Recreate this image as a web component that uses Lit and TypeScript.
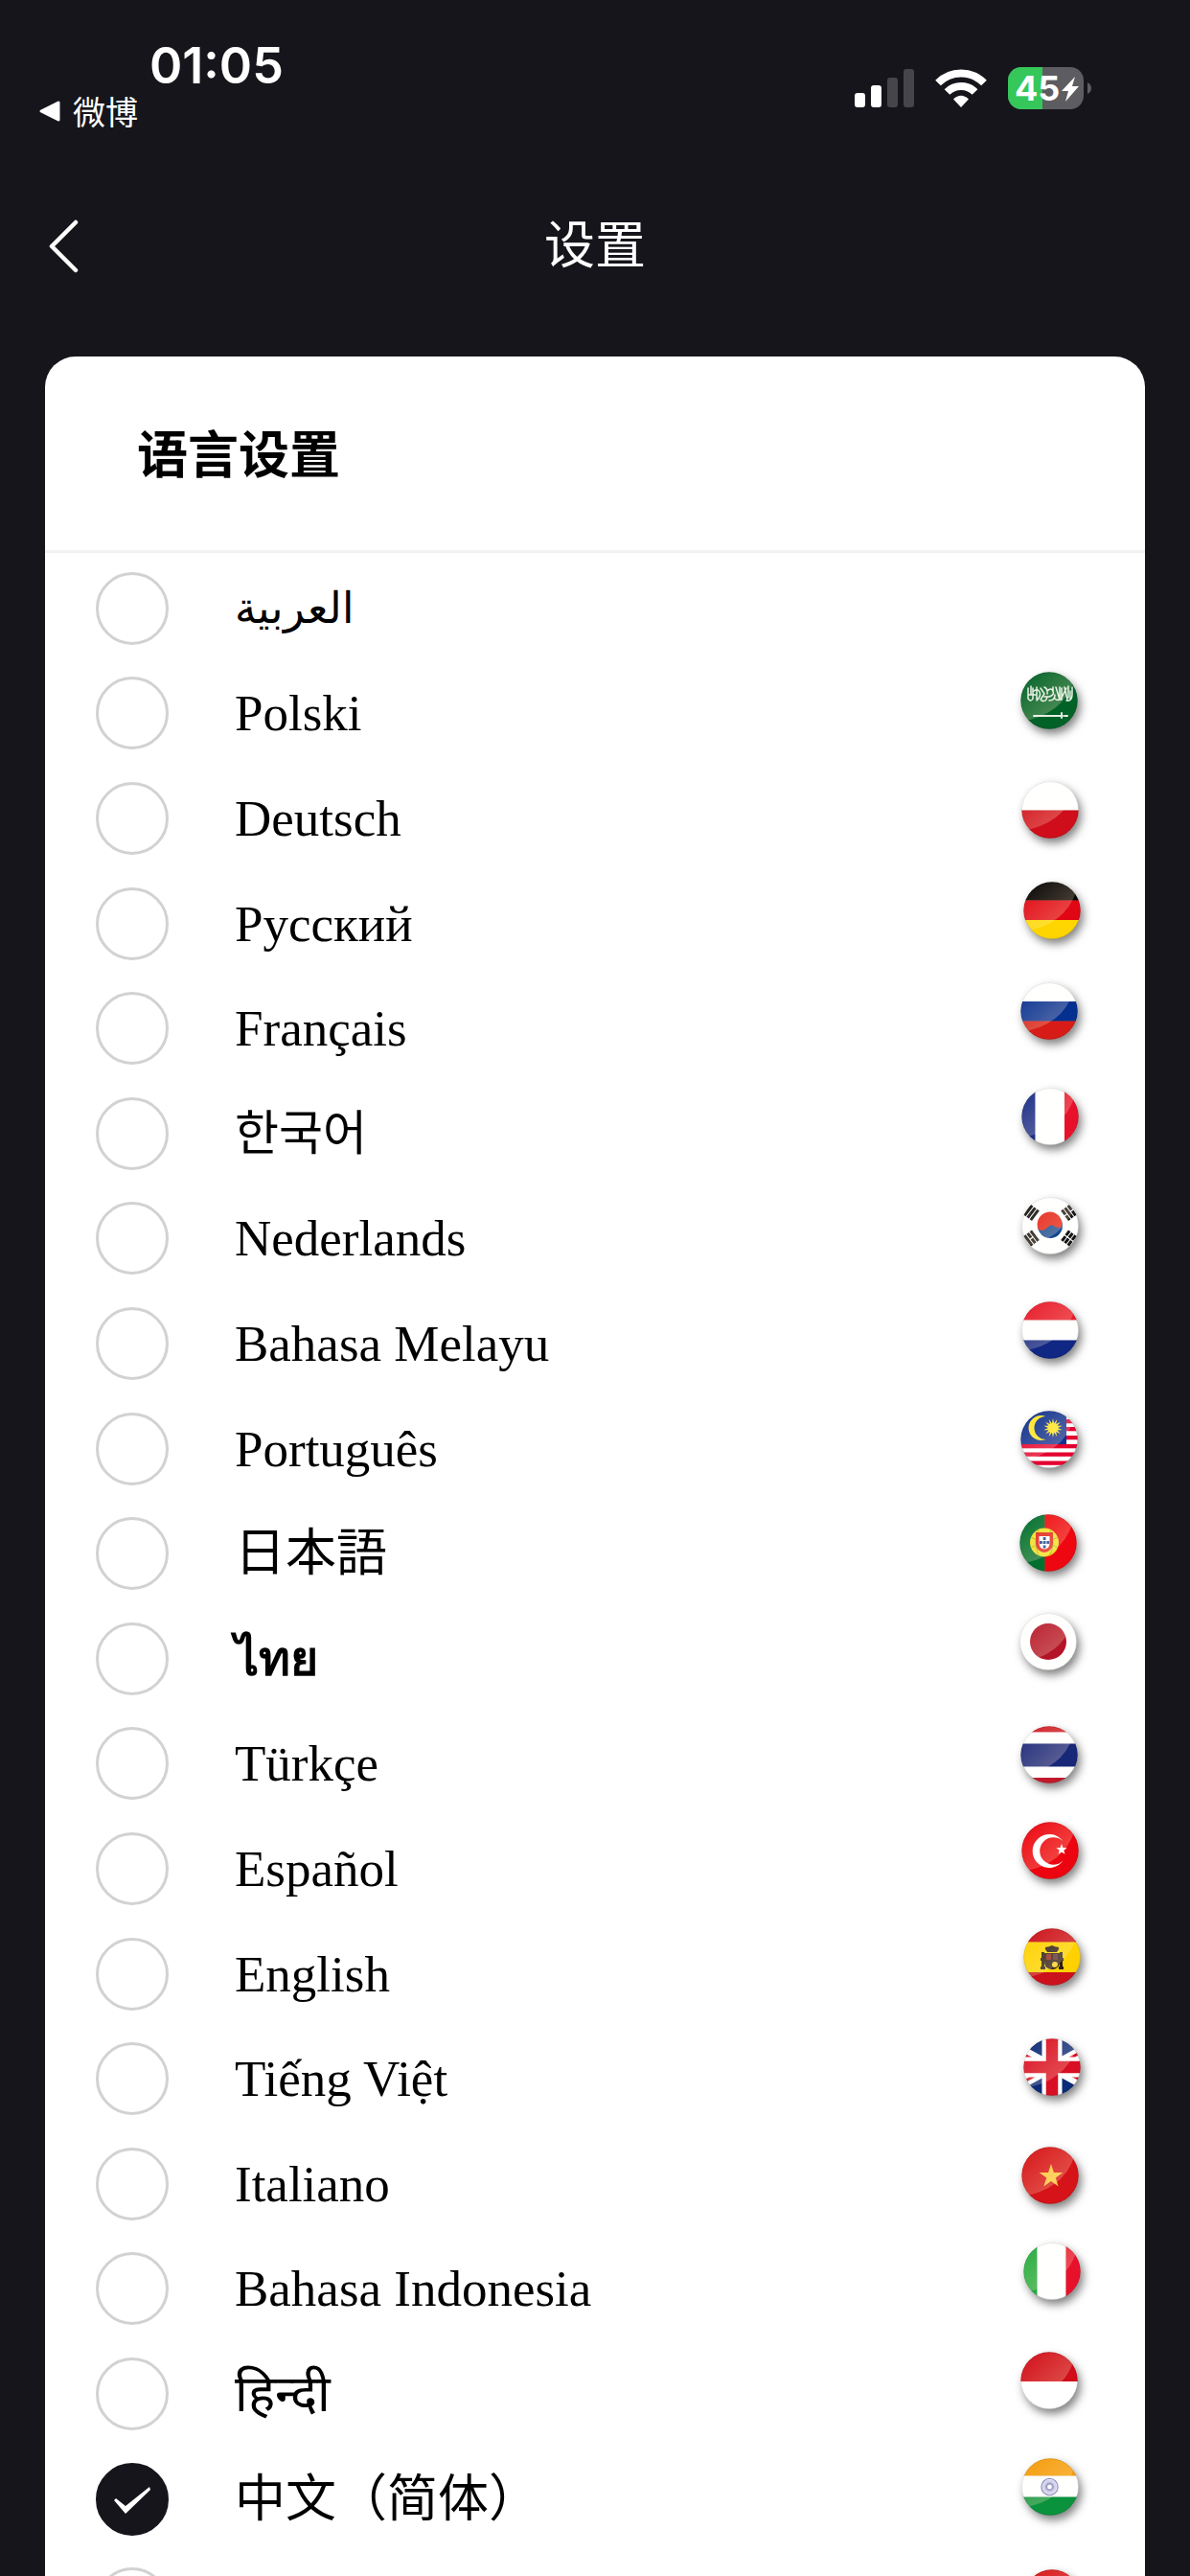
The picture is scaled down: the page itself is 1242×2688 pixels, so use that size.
import { LitElement, html, svg, css, nothing } from "lit";
import { customElement, property, state } from "lit/decorators.js";

type Flag = { art: unknown; cx: number; cy: number };
type Language = { code: string; name?: string; label?: string; flag?: Flag };

/* Every flag is drawn in a 60 x 60 box and clipped to a disc. */
const bands = (...parts: [string, number][]) => {
  let y = 0;
  return parts.map(([fill, h]) => {
    const band = svg`<rect x="0" y=${y} width="60" height=${h + 0.3} fill=${fill}></rect>`;
    y += h;
    return band;
  });
};
const columns = (...parts: [string, number][]) => {
  let x = 0;
  return parts.map(([fill, w]) => {
    const column = svg`<rect x=${x} y="0" width=${w + 0.3} height="60" fill=${fill}></rect>`;
    x += w;
    return column;
  });
};
const star = (cx: number, cy: number, outer: number, inner: number, tips: number, fill: string, turn = 0) => {
  const points = Array.from({ length: tips * 2 }, (_, i) => {
    const r = i % 2 ? inner : outer;
    const a = (Math.PI * i) / tips - Math.PI / 2 + turn;
    return `${(cx + r * Math.cos(a)).toFixed(2)},${(cy + r * Math.sin(a)).toFixed(2)}`;
  }).join(" ");
  return svg`<polygon points=${points} fill=${fill}></polygon>`;
};

const saudi = svg`
  <rect width="60" height="60" fill="#006227"></rect>
  <g fill="none" stroke="#e6efe4" stroke-width="1.5" stroke-linecap="round" stroke-linejoin="round">
    <path d="M8 17v11q3 4 5 0V17M11 15v8M9 24h7M17 16v13M14 20q4-3 6 1t-3 9M21 17l4 6-4 6M22 30q5 2 6-4M25 16q4 2 3 7M28 20q4-4 6 0t-4 6h-5M30 30q6 0 6-6M34 16v5M37 16l4 13M36 28q3 3 5 0V16M43 17v12M42 29l6-12M46 16l3 13M50 15v12M48 30q6 1 6-6V16M52 20v9"></path>
    <path d="M14 46h30" stroke-width="2"></path><path d="M43 43v5M46 46h3" stroke-width="2"></path>
  </g>`;

const trigram = (x: number, y: number, angle: number, broken: number[]) => svg`
  <g transform=${`translate(${x} ${y}) rotate(${angle})`} stroke="#151515" stroke-width="3">
    ${[-4, 0, 4].map((d, i) =>
      broken.includes(i)
        ? svg`<path d=${`M-6.500 ${d}H-0.600M0.600 ${d}H6.500`}></path>`
        : svg`<path d=${`M-6.500 ${d}H6.500`}></path>`)}
  </g>`;
const korea = svg`
  <rect width="60" height="60" fill="#fffffe"></rect>
  <circle cx="30" cy="30" r="13" fill="#0f478d"></circle>
  <path d="M17.500 33.500A13 13 0 1 1 42.500 27.500Q42 34 36 31.500C31 28.500 30 29 27 32C23 36 19.500 35 17.500 33.500Z" fill="#e32219"></path>
  ${trigram(10.5, 16.5, -53, [])}${trigram(49.5, 16.5, 53, [0, 2])}
  ${trigram(10.5, 43, 53, [1])}${trigram(49.5, 43, -53, [0, 1, 2])}`;

const malaysia = svg`
  <rect width="60" height="60" fill="#fff"></rect>
  ${[9, 17, 26, 35, 43.5, 52.5].map((y) => svg`<rect y=${y} width="60" height="4.3" fill="#e4002f"></rect>`)}
  <rect width="48" height="35" fill="#0f3290"></rect>
  <path d="M26.500 6A13 13 0 1 0 26.500 30A11.800 11.800 0 1 1 26.500 6Z" fill="#ffe52c"></path>
  ${star(34, 18, 10, 5, 14, "#ffe52c")}`;

const portugal = svg`
  ${columns(["#00702f", 26.5], ["#ee0710", 34])}
  <circle cx="26" cy="29.500" r="15" fill="#eedf27"></circle>
  <path d="M12 24q14 8 28 0M12 35q14-8 28 0M20 16q-6 13 0 27M32 16q6 13 0 27" fill="none" stroke="#c4b51c" stroke-width="1.200"></path>
  <path d="M17 19H35V31Q34 39 26 40Q18 39 17 31Z" fill="#e3251c"></path>
  <path d="M20.500 23H31.500V31Q31 36 26 36.500Q21 36 20.500 31Z" fill="#fff"></path>
  <g fill="#17418d"><rect x="24.700" y="24" width="2.800" height="3"></rect><rect x="21" y="28" width="2.800" height="3"></rect><rect x="24.700" y="28" width="2.800" height="3"></rect><rect x="28.400" y="28" width="2.800" height="3"></rect><rect x="24.700" y="32.500" width="2.800" height="3"></rect></g>`;

const turkey = svg`
  <rect width="60" height="60" fill="#ec0510"></rect>
  <path d="M43.500 20.500A17.500 17.500 0 1 0 43.500 40.500A14.200 14.200 0 1 1 43.500 20.500Z" fill="#fff"></path>
  ${star(42, 29, 6, 2.4, 5, "#fff")}`;

const spain = svg`
  ${bands(["#cb111b", 14.5], ["#ffd100", 31.5], ["#cb111b", 15])}
  <g fill="#2b1d18">
    <path d="M23 22Q22 19 26 19.500L30 18L34 19.500Q38 19 37 22L35 25H25Z"></path>
    <path d="M22 26H38V36Q37 43 30 43Q23 43 22 36Z"></path>
    <path d="M19 25h3v15h1v3h-5v-3h1zM38 25h3v15h1v3h-5v-3h1zM18 31h5v3h-5zM37 31h5v3h-5z"></path>
  </g>
  <path d="M24 27h5v6h-5z" fill="#8d2921"></path><path d="M31 27h5v6h-5z" fill="#59303a"></path>
  <circle cx="33" cy="38" r="3" fill="#f5cf2c"></circle>`;

const britain = svg`
  <rect width="60" height="60" fill="#0b2b78"></rect>
  <path d="M-30 -3L90 63M90 -3L-30 63" stroke="#fff" stroke-width="10"></path>
  <path d="M-30 0L30 33M90 -2L30 31M-30 62L30 29M90 60L30 27" stroke="#d80e24" stroke-width="3"></path>
  <path d="M30 0V60M0 30H60" stroke="#fff" stroke-width="21"></path>
  <path d="M30 0V60M0 30H60" stroke="#d80e24" stroke-width="12.500"></path>`;

const india = svg`
  ${bands(["#f59b0c", 18.5], ["#fffffe", 22], ["#0a923c", 20])}
  <g fill="none" stroke="#7779b8">
    <circle cx="29.500" cy="30" r="8.600" stroke-width="1.300"></circle>
    <circle cx="29.500" cy="30" r="6" stroke-width="3" stroke="#c9c9e6"></circle>
    <circle cx="29.500" cy="30" r="3.500" stroke-width="2.400" stroke="#8d8fc6"></circle>
  </g>`;

const LANGUAGES: Language[] = [
  { code: "ar", name: "العربية" },
  { code: "pl", name: "Polski", flag: { art: saudi, cx: 54, cy: 42 } },
  { code: "de", name: "Deutsch", flag: { art: bands(["#fffffe", 30.5], ["#d00d1a", 30]), cx: 55, cy: 46 } },
  { code: "ru", name: "Русский", flag: { art: bands(["#050404", 19.5], ["#e00613", 20.5], ["#ffd500", 21]), cx: 57, cy: 41 } },
  { code: "fr", name: "Français", flag: { art: bands(["#fffffe", 20], ["#04308f", 20.5], ["#d71c17", 20]), cx: 54, cy: 37 } },
  { code: "ko", name: "한국어", flag: { art: columns(["#1b2f87", 14.5], ["#fffffe", 30.5], ["#e8112b", 16]), cx: 55, cy: 37 } },
  { code: "nl", name: "Nederlands", flag: { art: korea, cx: 55, cy: 42 } },
  { code: "ms", name: "Bahasa Melayu", flag: { art: bands(["#e81a2b", 19.5], ["#fffffe", 21], ["#102783", 20]), cx: 55, cy: 41 } },
  { code: "pt", name: "Português", flag: { art: malaysia, cx: 54, cy: 45 } },
  { code: "ja", name: "日本語", flag: { art: portugal, cx: 53, cy: 44 } },
  { code: "th", name: "ไทย", flag: { art: svg`<rect width="60" height="60" fill="#fffffe"></rect><circle cx="30" cy="30" r="19" fill="#b31428"></circle>`, cx: 53, cy: 37 } },
  { code: "tr", name: "Türkçe", flag: { art: bands(["#cf2029", 6.5], ["#fffffe", 12], ["#182878", 24], ["#fffffe", 11.5], ["#c01a2a", 7]), cx: 54, cy: 46 } },
  { code: "es", name: "Español", flag: { art: turkey, cx: 55, cy: 36 } },
  { code: "en", name: "English", flag: { art: spain, cx: 57, cy: 37 } },
  { code: "vi", name: "Tiếng Việt", flag: { art: britain, cx: 57, cy: 43 } },
  { code: "it", name: "Italiano", flag: { art: svg`<rect width="60" height="60" fill="#d61318"></rect>${star(31, 31, 13, 5, 5, "#ffc63c")}`, cx: 55, cy: 46 } },
  { code: "id", name: "Bahasa Indonesia", flag: { art: columns(["#25ab40", 14.5], ["#fffffe", 30], ["#e8112b", 16]), cx: 57, cy: 37 } },
  { code: "hi", name: "हिन्दी", flag: { art: bands(["#d00d18", 31], ["#fff", 30]), cx: 54, cy: 41 } },
  { code: "zh-Hans", name: "中文（简体）", flag: { art: india, cx: 55, cy: 42 } },
  { code: "zh-Hant", label: "中文（繁體）", flag: { art: svg`<rect width="60" height="60" fill="#d61318"></rect>`, cx: 57, cy: 49 } },
];

@customElement("flag-badge")
export class FlagBadge extends LitElement {
  @property({ attribute: false }) flag!: Flag;

  static styles = css`
    :host { display: block; }
    .badge { display: block; width: 110px; height: 100px; overflow: visible; }
    .disc { filter: drop-shadow(3px 5px 5px rgba(0, 0, 0, 0.5)); }
    .gloss { mix-blend-mode: screen; }
  `;

  render() {
    const { art, cx, cy } = this.flag;
    return html`<svg class="badge" viewBox="0 5 110 100" aria-hidden="true">
      <defs>
        <clipPath id="round"><circle cx="30" cy="30" r="29.700"></circle></clipPath>
        <linearGradient id="gloss" x1="0" y1="0" x2="1" y2="1">
          <stop offset="0" stop-color="#ffe0b8" stop-opacity="0"></stop>
          <stop offset="1" stop-color="#ffe0b8" stop-opacity="0.4"></stop>
        </linearGradient>
      </defs>
      <g class="disc" transform=${`translate(${cx - 30} ${cy - 30})`}>
        <g clip-path="url(#round)">
          ${art}
          <path class="gloss" d="M0 0H58Q50 40 10 50L0 52Z" fill="url(#gloss)"></path>
          <circle cx="30" cy="30" r="29.500" fill="none" stroke="#000" stroke-opacity="0.12"></circle>
        </g>
      </g>
    </svg>`;
  }
}

@customElement("status-bar")
export class StatusBar extends LitElement {
  static styles = css`
    :host { display: block; color: #fff; }
    .bar { display: flex; justify-content: space-between; padding: 36px 102px 0 40px; }
    .left { display: flex; flex-direction: column; }
    .time { padding-left: 116px; font: 600 52px/66px Inter, "Liberation Sans", sans-serif; }
    .back { display: flex; align-items: center; gap: 12px; color: inherit; text-decoration: none;
      font: 400 34px/28px "Noto Sans CJK SC", sans-serif; }
    .triangle { width: 24px; height: 24px; }
    .icons { display: flex; align-items: flex-start; gap: 22px; padding-top: 34px; }
    .signal { width: 62px; height: 44px; }
    .wifi { width: 54px; height: 44px; }
    .battery { width: 88px; height: 44px; }
    .level { font: 700 36px Inter, "Liberation Sans", sans-serif; }
  `;

  render() {
    return html`<div class="bar">
      <div class="left">
        <time class="time">01:05</time>
        <a class="back" href="#weibo">
          <svg class="triangle" viewBox="0 0 24 24" aria-hidden="true"><path d="M3 12L21 3V21Z" fill="#fff" stroke="#fff" stroke-width="3" stroke-linejoin="round"></path></svg>
          <span>微博</span>
        </a>
      </div>
      <div class="icons">
        <svg class="signal" viewBox="0 0 62 44" aria-hidden="true">
          <rect x="0" y="27" width="11" height="15" rx="3" fill="#fff"></rect>
          <rect x="17" y="19" width="11" height="23" rx="3" fill="#fff"></rect>
          <rect x="34" y="11" width="11" height="31" rx="3" fill="#46454a"></rect>
          <rect x="51" y="2" width="11" height="40" rx="3" fill="#46454a"></rect>
        </svg>
        <svg class="wifi" viewBox="0 0 54 44" aria-hidden="true">
          <g fill="none" stroke="#fff" stroke-width="8">
            <path d="M3 16.500Q13 6.500 27 6.500T51 16.500"></path>
            <path d="M12.500 26Q18.500 20 27 20T41.500 26"></path>
          </g>
          <path d="M19 33.500Q27 26 35 33.500L27 42Z" fill="#fff"></path>
        </svg>
        <svg class="battery" viewBox="0 0 88 44" role="img" aria-label="45%">
          <defs><clipPath id="cell"><rect width="79" height="44" rx="14"></rect></clipPath></defs>
          <g clip-path="url(#cell)">
            <rect width="79" height="44" fill="#5d5c61"></rect>
            <rect width="36" height="44" fill="#35c759"></rect>
          </g>
          <path d="M83 16Q87 18 87 22T83 28Z" fill="#5d5c61"></path>
          <text class="level" x="7" y="35" fill="#fff">45</text>
          <path d="M70 10L56 25H63L60 36L74 20H67Z" fill="#fff"></path>
        </svg>
      </div>
    </div>`;
  }
}

@customElement("app-root")
export class AppRoot extends LitElement {
  @state() private selected = "zh-Hans";

  static styles = css`
    :host { display: block; }
    .screen { display: flex; flex-direction: column; height: 100vh; overflow: hidden; background: #16151b;
      font-family: "Liberation Serif", "Noto Sans CJK SC", serif; color: #000; }
    .nav { display: grid; grid-template-columns: 80px 1fr 80px; align-items: center; padding: 0 32px;
      margin: 84px 0 82px; height: 76px; color: #fff; }
    .return { width: 72px; height: 72px; padding: 0; border: 0; background: none; color: inherit; }
    .chevron { display: block; width: 72px; height: 72px; }
    .title { margin: 0; text-align: center; font: 400 53px/76px "Noto Sans CJK SC", sans-serif; }
    .card { display: flex; flex-direction: column; flex: 1; min-height: 0; margin: 0 47px;
      border-radius: 32px 32px 0 0; background: #fff; overflow: hidden; }
    .heading { margin: 0; padding: 61px 96px 65px; border-bottom: 3px solid #f2f2f2;
      font: 700 53px/76px "Noto Sans CJK SC", sans-serif; }
    .scroller { flex: 1; min-height: 0; overflow: auto; scrollbar-width: none; }
    .list { display: grid; grid-auto-rows: 1fr; box-sizing: border-box; min-height: 2195px; padding: 3px 44px 0 53px; }
    .row { display: grid; grid-template-columns: 76px 1fr 110px; column-gap: 69px; align-items: center; }
    .choice { display: grid; }
    .radio, .tick { grid-area: 1 / 1; width: 76px; height: 76px; }
    .radio { appearance: none; box-sizing: border-box; margin: 0; border: 3px solid #d2d2d2; border-radius: 50%; background: #fff; }
    .radio:checked { border-color: #16151b; background: #16151b; }
    .tick { pointer-events: none; }
    .name { font-size: 53px; line-height: 76px; }
    .name:lang(ko) { font-size: 50px; }
    .name:lang(ar) { font-size: 45px; }
    .name:lang(th) { font-size: 50px; font-weight: 600; }
  `;

  render() {
    return html`<div class="screen">
      <status-bar></status-bar>
      <header class="nav">
        <button class="return" type="button" aria-label="返回">
          <svg class="chevron" viewBox="0 0 72 72" aria-hidden="true"><path d="M47 16L22 41L47 66" fill="none" stroke="#fff" stroke-width="4.500" stroke-linecap="round" stroke-linejoin="round"></path></svg>
        </button>
        <h1 class="title">设置</h1>
      </header>
      <main class="card">
        <h2 class="heading" id="heading">语言设置</h2>
        <div class="scroller">
          <div class="list" role="radiogroup" aria-labelledby="heading">
            ${LANGUAGES.map((item) => this.row(item))}
          </div>
        </div>
      </main>
    </div>`;
  }

  private row({ code, name, label, flag }: Language) {
    const on = code === this.selected;
    return html`<label class="row">
      <span class="choice">
        <input class="radio" type="radio" name="language" value=${code} aria-label=${label ?? nothing} .checked=${on} @change=${() => (this.selected = code)} />
        ${on
          ? html`<svg class="tick" viewBox="0 0 76 76" aria-hidden="true"><path d="M19 39L21 37L31 45L56 25L57 28L31 53Z" fill="#fff"></path></svg>`
          : null}
      </span>
      <span class="name" lang=${code}>${name}</span>
      ${flag ? html`<flag-badge .flag=${flag}></flag-badge>` : null}
    </label>`;
  }
}
